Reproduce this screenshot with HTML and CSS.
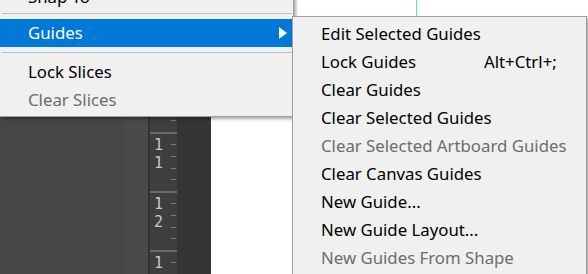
FILE: index.html
```html
<!DOCTYPE html>
<html>
	<head>
		<meta charset="UTF-8">
		<title>Guides menu</title>
		<link rel="stylesheet" href="styles.css">
	</head>
	<body>
		<div class="workspace">
			<div class="panel"></div>
			<div class="ruler">
				<div class="seg"><div class="num"><span>1</span><span>0</span></div><div class="ticks"></div></div>
				<div class="seg"><div class="num"><span>1</span><span>0</span></div><div class="ticks"></div></div>
				<div class="seg"><div class="num"><span>1</span><span>1</span></div><div class="ticks"></div></div>
				<div class="seg"><div class="num"><span>1</span><span>2</span></div><div class="ticks"></div></div>
				<div class="seg"><div class="num"><span>1</span><span>3</span></div><div class="ticks"></div></div>
			</div>
			<div class="gutter"></div>
			<div class="canvas">
				<div class="guide"></div>
			</div>
		</div>

		<!-- 主菜单 -->
		<ul class="menu menumain">
			<li class="item">Snap To</li>
			<li class="sep sepfirst"></li>
			<li class="item active">
				<span>Guides</span>
				<svg class="arrow" width="8" height="12" viewBox="0 0 8 12"><path d="M0 0 L8 6 L0 12 Z" fill="#fff"/></svg>
			</li>
			<li class="sep"></li>
			<li class="item">Lock Slices</li>
			<li class="item disabled">Clear Slices</li>
		</ul>

		<!-- 子菜单 -->
		<ul class="menu menusub">
			<li class="item">Edit Selected Guides</li>
			<li class="item"><span class="label">Lock Guides</span><span class="key">Alt+Ctrl+;</span></li>
			<li class="item">Clear Guides</li>
			<li class="item">Clear Selected Guides</li>
			<li class="item disabled">Clear Selected Artboard Guides</li>
			<li class="item">Clear Canvas Guides</li>
			<li class="item">New Guide...</li>
			<li class="item">New Guide Layout...</li>
			<li class="item disabled">New Guides From Shape</li>
		</ul>
	</body>
</html>
```

FILE: styles.css
```css
html, body{
	margin:0;
	padding:0;
}
body{
	position:relative;
	width:588px;
	height:274px;
	overflow:hidden;
	background-color:#fff;
	font-family:"Noto Sans", "Open Sans", sans-serif;
	font-size:16.8px;
}

/* 背景工作区 */
.workspace{
	display:flex;
	height:274px;
}
.panel{
	width:148px;
	background:linear-gradient(to right, #464646 0, #464646 125px, #4a4a4a 125px);
	border-right:2px solid #313131;
}
.ruler{
	width:27px;
	background-color:#3e3e3e;
	padding-top:14px;
	overflow:hidden;
}
.ruler .seg{
	display:flex;
	justify-content:space-between;
	height:57px;
	border-top:2px solid #6a6a6a;
}
.ruler .num{
	display:flex;
	flex-direction:column;
	padding:2px 0 0 4px;
	font-family:"DejaVu Sans Mono", monospace;
	font-size:15px;
	line-height:18px;
	color:#c4c8cc;
}
.ruler .ticks{
	width:5px;
	margin-right:1px;
	background:repeating-linear-gradient(to bottom, transparent 0, transparent 10px, #7a7a7a 10px, #7a7a7a 11px, transparent 11px, transparent 11.8px);
}
.gutter{
	width:34px;
	background-color:#353535;
}
.canvas{
	position:relative;
	flex:1;
	background-color:#fff;
}
.guide{
	position:absolute;
	top:0;
	bottom:0;
	left:205px;
	width:1px;
	background-color:#4fe6ee;
}

/* 菜单 */
.menu{
	position:absolute;
	margin:0;
	list-style:none;
	background-color:#f0f0f0;
	box-shadow:2px 2px 3px rgba(0,0,0,.35);
}
.menu .item{
	display:flex;
	align-items:center;
	height:28px;
	line-height:28px;
	color:#000;
	white-space:nowrap;
}
.menu .disabled{
	color:#6d6d6d;
}
.menumain{
	left:0;
	top:-17px;
	width:293px;
	padding:0 0 2px 0;
	border-right:1px solid #a0a0a0;
	border-bottom:1px solid #a0a0a0;
}
.menumain .item{
	padding-left:28px;
}
.menumain .active{
	justify-content:space-between;
	background-color:#0078d7;
	color:#fff;
}
.menumain .arrow{
	margin-right:6px;
}
.menumain .sep{
	height:1px;
	margin:5px 1px 5px 2px;
	background-color:#bcbcbc;
}
.menumain .sepfirst{
	margin-top:2px;
}
.menusub{
	left:292px;
	top:16px;
	width:293px;
	padding:3px 0 2px 0;
	border:1px solid #a0a0a0;
}
.menusub .item{
	padding-left:28px;
}
.menusub .label{
	width:163px;
}
```
